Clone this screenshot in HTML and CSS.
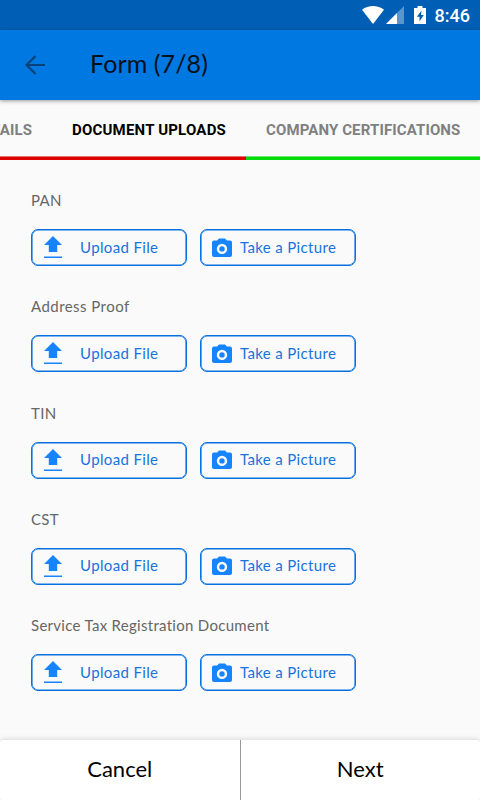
FILE: index.html
```html
<!DOCTYPE html>
<html lang="en">
<head>
<meta charset="utf-8">
<title>Form</title>
<link rel="stylesheet" href="styles.css">
</head>
<body>
<svg class="defs" aria-hidden="true">
  <symbol id="upload" viewBox="0 0 20 24"><path d="M10 1 19 10h-4.800v7H5.800v-7H1z"/><path d="M1 21.500h18v1.500H1z"/></symbol>
  <symbol id="camera" viewBox="0 0 20 20"><path fill-rule="evenodd" d="M7 .5h6l1.900 2H18q2 0 2 2v12.500q0 2-2 2H2q-2 0-2-2V4.500q0-2 2-2h3.100zM10 5.700a5.200 5.200 0 1 0 0 10.400A5.200 5.200 0 0 0 10 5.700zm0 2.500a2.700 2.700 0 1 1 0 5.400 2.700 2.700 0 0 1 0-5.400z"/></symbol>
</svg>
<div class="screen">
  <div class="status">
    <svg class="wifi" viewBox="0 0 22 18"><path d="M0 3.700C6.500-1.200 15.500-1.200 22 3.700L11 18z"/></svg>
    <svg class="signal" viewBox="0 0 18 18"><path class="faint" d="M18 0v18H0z"/><path d="M11 7v11H0z"/></svg>
    <svg class="battery" viewBox="0 0 12 18"><path fill-rule="evenodd" d="M3.500 0h5v2H12v16H0V2h3.500zM7.500 4.500 2.800 10.700h2.700v4.600l4.300-6.400H7z"/></svg>
    <span class="clock">8:46</span>
  </div>
  <header class="appbar">
    <svg class="back" viewBox="0 0 20 20"><path d="M20 10H2M10.500 1 1.500 10l9 9"/></svg>
    <h1>Form (7/8)</h1>
  </header>
  <nav class="tabs">
    <div class="tab previous"><span>DETAILS</span></div>
    <div class="tab active"><span>DOCUMENT UPLOADS</span></div>
    <div class="tab next"><span>COMPANY CERTIFICATIONS</span></div>
  </nav>
  <main class="form">
    <section><h2>PAN</h2><div class="actions"><button class="upload"><svg><use href="#upload"/></svg><span>Upload File</span></button><button class="picture"><svg><use href="#camera"/></svg><span>Take a Picture</span></button></div></section>
    <section><h2 class="address">Address Proof</h2><div class="actions"><button class="upload"><svg><use href="#upload"/></svg><span>Upload File</span></button><button class="picture"><svg><use href="#camera"/></svg><span>Take a Picture</span></button></div></section>
    <section><h2>TIN</h2><div class="actions"><button class="upload"><svg><use href="#upload"/></svg><span>Upload File</span></button><button class="picture"><svg><use href="#camera"/></svg><span>Take a Picture</span></button></div></section>
    <section><h2>CST</h2><div class="actions"><button class="upload"><svg><use href="#upload"/></svg><span>Upload File</span></button><button class="picture"><svg><use href="#camera"/></svg><span>Take a Picture</span></button></div></section>
    <section><h2>Service Tax Registration Document</h2><div class="actions"><button class="upload"><svg><use href="#upload"/></svg><span>Upload File</span></button><button class="picture"><svg><use href="#camera"/></svg><span>Take a Picture</span></button></div></section>
  </main>
  <footer class="footer">
    <button class="cancel"><span>Cancel</span></button>
    <button class="forward"><span>Next</span></button>
  </footer>
</div>
</body>
</html>
```

FILE: styles.css
```css
* { box-sizing: border-box; }
body { margin: 0; background: #fafafa; font-family: Lato, sans-serif; }
button { margin: 0; padding: 0; font: inherit; background: none; border: 0; }
.defs { display: none; }
.screen { height: 800px; display: flex; flex-direction: column; overflow: hidden; }
.status { flex: 0 0 30px; display: flex; align-items: flex-start; padding: 6px 10px 0 0; justify-content: flex-end; background: #005fb5; color: #fff; fill: #fff; }
.wifi { width: 22px; height: 18px; }
.signal { width: 18px; height: 18px; margin-left: 2px; }
.battery { width: 12px; height: 18px; margin-left: 10px; }
.faint { opacity: .35; }
.clock { font: 500 18px/20px Roboto, sans-serif; margin-left: 9px; }
.appbar { flex: 0 0 70px; display: flex; align-items: center; padding-left: 25px; background: #0078e1; box-shadow: 0 1px 4px rgba(0,0,0,.4); z-index: 1; }
.back { width: 20px; height: 20px; fill: none; stroke: #064277; stroke-width: 2.200; }
h1 { margin: 0 0 4px 45px; font-size: 25px; font-weight: 400; line-height: 30px; letter-spacing: .1px; color: #05101b; }
.tabs { flex: 0 0 60px; display: flex; font: 700 15px/20px Roboto, sans-serif; letter-spacing: .12px; white-space: nowrap; }
.tab { border-bottom: 3px solid #dc0000; box-shadow: inset 0 -1px #e47070; padding-top: 20px; color: #808080; }
.previous { width: 52px; display: flex; justify-content: flex-end; padding-right: 20px; }
.active { width: 194px; padding-left: 20px; letter-spacing: .2px; color: #000; }
.next { width: 234px; padding-left: 20px; border-color: #00dc0a; box-shadow: inset 0 -1px #70e475; }
.form { flex: 1; padding: 30px 31px 0; }
section { height: 106.250px; }
h2 { margin: 0; font-size: 15px; font-weight: 400; line-height: 20px; letter-spacing: .29px; color: #666; }
.address { letter-spacing: .45px; }
.actions { display: flex; gap: 13px; margin-top: 19px; }
.actions button { width: 156px; height: 37px; display: flex; align-items: center; border: 1px solid #0870df; box-shadow: inset 0 0 0 .600px #0870df; border-radius: 7px; font-size: 15px; line-height: 20px; letter-spacing: .35px; color: #1873dc; fill: #1683ff; white-space: nowrap; }
.actions span { padding-bottom: 2px; }
.upload svg { width: 20px; height: 24px; margin: 0 0 1px 11px; }
.upload span { margin-left: 17px; }
.picture svg { width: 20px; height: 20px; margin-left: 11px; }
.picture span { margin-left: 8px; }
.footer { flex: 0 0 60px; display: flex; background: #fff; border-radius: 3px; box-shadow: 0 -1px 5px rgba(0,0,0,.14); font-size: 22px; line-height: 28px; color: #000; }
.footer button { flex: 1; color: #000; padding-bottom: 2px; }
.forward { border-left: 1px solid #999; }
```
